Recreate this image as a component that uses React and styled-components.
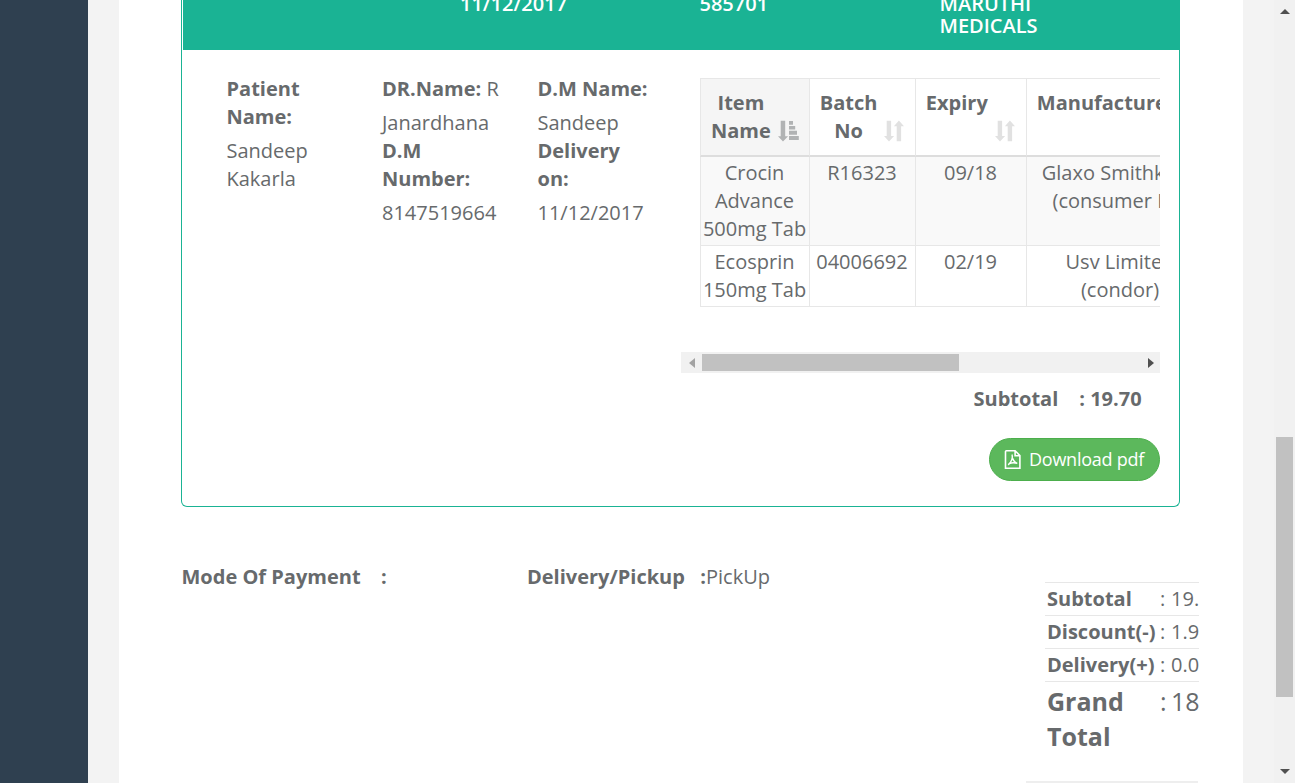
import React from "react";
import styled, { createGlobalStyle } from "styled-components";

const Global = createGlobalStyle`
  * { box-sizing: border-box; }
  html, body { margin: 0; overflow: hidden; }
  body {
    font-family: "Open Sans", "Liberation Sans", sans-serif;
    font-size: 20px;
    line-height: 28px;
    color: #676a6c;
  }
`;

const Page = styled.div`
  display: flex;
  width: 1295px;
  height: 783px;
  overflow: hidden;
  background: #f3f3f3;
`;
const Sidebar = styled.nav`
  width: 88px;
  background: #2f4050;
`;
const Content = styled.main`
  width: 1124px;
  margin: 0 31px;
  padding: 0 44px 0 62px;
  background: #fff;
`;
const OrderCard = styled.section`
  width: 999px;
  height: 507px;
  border: 1px solid #1ab394;
  border-top: 0;
  border-radius: 0 0 6px 6px;
`;
const CardHeader = styled.header`
  display: flex;
  align-items: flex-end;
  height: 50px;
  margin-left: 1px;
  background: #1ab394;
  color: #fff;
  font-weight: 600;
  line-height: 22px;
`;
const HeaderCell = styled.div`
  width: ${(p) => p.$w}px;
  height: 57px;
  margin-left: ${(p) => p.$gap || 0}px;
`;
const CardBody = styled.div`
  display: flex;
  padding: 25px 19px 0 44.5px;
`;
const Details = styled.div`
  display: flex;
  width: 454.5px;
`;
const DetailColumn = styled.div`
  flex: none;
  width: 155.5px;
  padding-right: 40px;
`;
const Label = styled.strong`
  display: block;
  font-weight: 700;
`;
const Value = styled.div`
  margin-top: 6px;
  white-space: nowrap;
`;
const InlineField = styled.div`
  white-space: nowrap;
`;
const Items = styled.div`
  width: 479px;
`;
const TableClip = styled.div`
  height: 277px;
  padding: 3px 0 0 19px;
  overflow: hidden;
`;
const ItemTable = styled.div`
  display: grid;
  grid-template-columns: 110px 106px 111px 188px;
  width: 515px;
  border-top: 1px solid #e7e7e7;
  text-align: center;
`;
const Cell = styled.div`
  height: ${(p) => p.$h}px;
  padding: 2px 1px 0 0;
  border-right: 1px solid #e7e7e7;
  border-bottom: 1px solid #e7e7e7;
  background: ${(p) => (p.$striped ? "#f9f9f9" : "#fff")};
  white-space: pre;
  &:nth-child(4n + 1) { border-left: 1px solid #e7e7e7; }
`;
const HeadCell = styled(Cell)`
  display: flex;
  justify-content: space-between;
  height: 78px;
  padding: 10px ${(p) => (p.$sorted ? 10 : 11)}px 0 ${(p) => (p.$sorted ? 10 : 9.8)}px;
  border-bottom: 2px solid #dddddd;
  background: ${(p) => (p.$sorted ? "#f5f5f5" : "#fff")};
  font-weight: 700;
  white-space: normal;
  span { flex: none; width: min-content; }
  svg { flex: none; margin: 31px 0 0 -12px; }
`;
const ScrollRow = styled.div`
  display: flex;
  align-items: center;
  justify-content: space-between;
  height: 21px;
  padding: 0 6px 0 8px;
  background: #f1f1f1;
`;
const ScrollThumb = styled.div`
  width: 257px;
  height: 17px;
  margin: 0 auto 0 7px;
  background: #c1c1c1;
`;
const CardSubtotal = styled.div`
  display: flex;
  justify-content: flex-end;
  gap: 21px;
  padding: 12px 18.4px 0 0;
  font-weight: 700;
`;
const DownloadButton = styled.button`
  display: flex;
  align-items: center;
  width: 171px;
  height: 43px;
  margin: 25px 0 0 auto;
  padding: 0 0 1px 14px;
  border: 1px solid #4cae4c;
  border-radius: 22px;
  background: #5cb85c;
  color: #fff;
  font: 400 18px/26px "Open Sans", sans-serif;
  letter-spacing: -0.25px;
  white-space: nowrap;
  svg { margin: 1px 7px 0 0; }
`;
const Footer = styled.div`
  display: flex;
`;
const PaymentField = styled.div`
  display: flex;
  width: ${(p) => p.$w}px;
  padding: 56px 0 0 0.5px;
  white-space: nowrap;
`;
const FieldName = styled.strong`
  width: ${(p) => p.$w}px;
`;
const Totals = styled.div`
  width: 173px;
  margin-top: 75px;
  overflow: hidden;
`;
const TotalRow = styled.div`
  display: grid;
  grid-template-columns: 113px 39px;
  height: ${(p) => (p.$grand ? 100 : 33)}px;
  margin-left: 19px;
  padding: 2px 0 0 2px;
  border-top: 1px solid #e7e7e7;
  font-size: ${(p) => (p.$grand ? 25 : 20)}px;
  line-height: ${(p) => (p.$grand ? 35 : 28)}px;
  white-space: pre;
  span { word-spacing: ${(p) => (p.$grand ? -2 : 0.6)}px; }
`;
const TotalsEnd = styled.div`
  height: 2px;
  width: 172px;
  background: #eeeeee;
`;
const PageScroll = styled.aside`
  display: flex;
  flex-direction: column;
  align-items: center;
  width: 21px;
  padding: 9px 0;
  background: #f1f1f1;
`;
const PageThumb = styled.div`
  width: 17px;
  height: 260px;
  margin: 423px 0 auto;
  background: #c1c1c1;
`;

const SortBoth = () => (
  <svg width="20" height="22" viewBox="0 0 20 22" fill="#e1e1e1">
    <path d="M2.7.7h4.4v15.4h3L5 21.5 0 16.1h2.7z" />
    <path d="M12.7 21.3h4.4V6.2H20L14.9.6 9.9 6.2h2.8z" />
  </svg>
);
const SortAsc = () => (
  <svg width="21" height="22" viewBox="0 0 21 22" fill="#b1b3b4">
    <path d="M2.7.7h4.5v15.6h2.9L5 21.6 0 16.3h2.7zM11 .9h4v3.8h-4zM11 6h6.2v3.5H11zM11 10.8h8v3.9h-8zM11 16h9.8v4H11z" />
  </svg>
);
const PdfIcon = () => (
  <svg width="18" height="19" viewBox="-0.7 0 18 19" fill="none" stroke="#fff">
    <path d="M1.7.8h8.7l4.8 4.8v12.6H.8V1.5Q.8.8 1.7.8zM10.4.8v5h4.8" strokeWidth="1.6" />
    <path d="M7.3 4.5c1.4 3-1 8.2-3.8 10.4M7.3 6.5c.7 3.5 2.2 5.7 5.3 6.9-3.6-1.3-5.7-.9-8 .3" strokeWidth="1.4" />
  </svg>
);
const Arrow = ({ d, w, h, fill = "#505050" }) => (
  <svg width={w} height={h} viewBox={`0 0 ${w} ${h}`} fill={fill}><path d={d} /></svg>
);

const rows = [
  ["Crocin\nAdvance\n500mg Tab", "R16323", "09/18", "Glaxo Smithkline\n(consumer Hc)"],
  ["Ecosprin\n150mg Tab", "04006692", "02/19", "Usv Limited\n(condor)"],
];
const totals = [["Subtotal", ": 19.70"], ["Discount(-)", ": 1.97"], ["Delivery(+)", ": 0.00"]];

export default function App() {
  return (
    <Page>
      <Global />
      <Sidebar />
      <Content>
        <OrderCard>
          <CardHeader>
            <HeaderCell $w={239.5} $gap={277}>11/12/2017</HeaderCell>
            <HeaderCell $w={240}>585701</HeaderCell>
            <HeaderCell $w={130}>MARUTHI MEDICALS</HeaderCell>
          </CardHeader>
          <CardBody>
            <Details>
              <DetailColumn>
                <Label>Patient Name:</Label>
                <Value>Sandeep<br />Kakarla</Value>
              </DetailColumn>
              <DetailColumn>
                <InlineField><b>DR.Name:</b> R</InlineField>
                <Value>Janardhana</Value>
                <Label>D.M Number:</Label>
                <Value>8147519664</Value>
              </DetailColumn>
              <DetailColumn>
                <InlineField><b>D.M Name:</b></InlineField>
                <Value>Sandeep</Value>
                <Label>Delivery on:</Label>
                <Value>11/12/2017</Value>
              </DetailColumn>
            </Details>
            <Items>
              <TableClip>
                <ItemTable>
                  <HeadCell $sorted><span>Item Name</span><SortAsc /></HeadCell>
                  <HeadCell><span>Batch No</span><SortBoth /></HeadCell>
                  <HeadCell><span>Expiry</span><SortBoth /></HeadCell>
                  <HeadCell><span>Manufacturer</span><SortBoth /></HeadCell>
                  {rows.map((row, i) =>
                    row.map((text) => (
                      <Cell key={text} $striped={i === 0} $h={i === 0 ? 89 : 61}>{text}</Cell>
                    ))
                  )}
                </ItemTable>
              </TableClip>
              <ScrollRow>
                <Arrow w={6} h={10} d="M6 0v10L0 5z" fill="#a3a3a3" />
                <ScrollThumb />
                <Arrow w={6} h={10} d="M0 0v10l6-5z" />
              </ScrollRow>
              <CardSubtotal><span>Subtotal</span><span>: 19.70</span></CardSubtotal>
              <DownloadButton><PdfIcon />Download pdf</DownloadButton>
            </Items>
          </CardBody>
        </OrderCard>
        <Footer>
          <PaymentField $w={345.5}><FieldName $w={199.5}>Mode Of Payment</FieldName><b>:</b></PaymentField>
          <PaymentField $w={499.5}><FieldName $w={173.3}>Delivery/Pickup</FieldName><b>:</b>PickUp</PaymentField>
          <Totals>
            {totals.map(([name, amount]) => (
              <TotalRow key={name}><b>{name}</b><span>{amount}</span></TotalRow>
            ))}
            <TotalRow $grand><b>{"Grand\nTotal"}</b><span>{": 18.73"}</span></TotalRow>
            <TotalsEnd />
          </Totals>
        </Footer>
      </Content>
      <PageScroll>
        <Arrow w={10} h={5} d="M0 5h10L5 0z" />
        <PageThumb />
        <Arrow w={10} h={5} d="M0 0h10L5 5z" />
      </PageScroll>
    </Page>
  );
}
